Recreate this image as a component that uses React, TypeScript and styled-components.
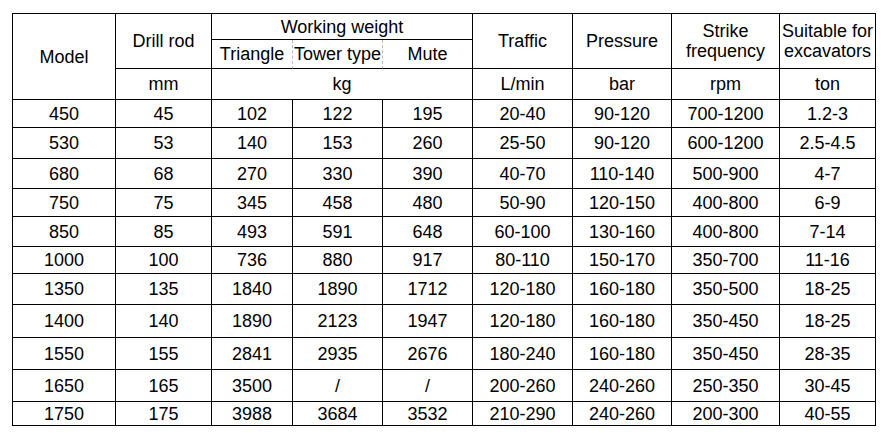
import React from 'react';
import styled, { createGlobalStyle } from 'styled-components';

const GlobalStyle = createGlobalStyle`
  html, body {
    margin: 0;
    padding: 0;
    background: #ffffff;
  }
  body {
    font-family: "Liberation Sans", Arial, sans-serif;
  }
`;

const Page = styled.div`
  padding: 13px 0 0 12px;
`;

const SpecTable = styled.table`
  border-collapse: separate;
  border-spacing: 0;
  table-layout: fixed;
  width: 863px;
  border-top: 1px solid #000;
  border-left: 1px solid #000;
  font-size: 18px;
  color: #000;
`;

const Col = styled.col<{ $w: number }>`
  width: ${({ $w }) => $w}px;
`;

const Row = styled.tr<{ $h: number }>`
  height: ${({ $h }) => $h}px;
`;

const Cell = styled.td<{ $dashed?: boolean }>`
  box-sizing: border-box;
  padding: 0;
  text-align: center;
  vertical-align: middle;
  white-space: nowrap;
  font-weight: normal;
  line-height: 20px;
  border-right: 1px ${({ $dashed }) => ($dashed ? 'dashed #b8b8b8' : 'solid #000')};
  border-bottom: 1px solid #000;
`;

const colWidths = [103, 96, 81, 90, 90, 100, 99, 108, 96];

const rows: { h: number; v: string[] }[] = [
  { h: 28, v: ['450', '45', '102', '122', '195', '20-40', '90-120', '700-1200', '1.2-3'] },
  { h: 31, v: ['530', '53', '140', '153', '260', '25-50', '90-120', '600-1200', '2.5-4.5'] },
  { h: 30, v: ['680', '68', '270', '330', '390', '40-70', '110-140', '500-900', '4-7'] },
  { h: 28, v: ['750', '75', '345', '458', '480', '50-90', '120-150', '400-800', '6-9'] },
  { h: 30, v: ['850', '85', '493', '591', '648', '60-100', '130-160', '400-800', '7-14'] },
  { h: 27, v: ['1000', '100', '736', '880', '917', '80-110', '150-170', '350-700', '11-16'] },
  { h: 31, v: ['1350', '135', '1840', '1890', '1712', '120-180', '160-180', '350-500', '18-25'] },
  { h: 33, v: ['1400', '140', '1890', '2123', '1947', '120-180', '160-180', '350-450', '18-25'] },
  { h: 32, v: ['1550', '155', '2841', '2935', '2676', '180-240', '160-180', '350-450', '28-35'] },
  { h: 32, v: ['1650', '165', '3500', '/', '/', '200-260', '240-260', '250-350', '30-45'] },
  { h: 24, v: ['1750', '175', '3988', '3684', '3532', '210-290', '240-260', '200-300', '40-55'] },
];

const App: React.FC = () => {
  return (
    <Page>
      <GlobalStyle />
      <SpecTable>
        <colgroup>
          {colWidths.map((w, i) => (
            <Col key={i} $w={w} />
          ))}
        </colgroup>
        <thead>
          <Row $h={26}>
            <Cell as="th" rowSpan={3}>Model</Cell>
            <Cell as="th" rowSpan={2}>Drill rod</Cell>
            <Cell as="th" colSpan={3}>Working weight</Cell>
            <Cell as="th" rowSpan={2}>Traffic</Cell>
            <Cell as="th" rowSpan={2}>Pressure</Cell>
            <Cell as="th" rowSpan={2}>
              Strike
              <br />
              frequency
            </Cell>
            <Cell as="th" rowSpan={2}>
              Suitable for
              <br />
              excavators
            </Cell>
          </Row>
          <Row $h={29}>
            <Cell as="th" $dashed>Triangle</Cell>
            <Cell as="th" $dashed>Tower type</Cell>
            <Cell as="th">Mute</Cell>
          </Row>
          <Row $h={31}>
            <Cell as="th">mm</Cell>
            <Cell as="th" colSpan={3}>kg</Cell>
            <Cell as="th">L/min</Cell>
            <Cell as="th">bar</Cell>
            <Cell as="th">rpm</Cell>
            <Cell as="th">ton</Cell>
          </Row>
        </thead>
        <tbody>
          {rows.map((r) => (
            <Row key={r.v[0]} $h={r.h}>
              {r.v.map((v, i) => (
                <Cell key={i}>{v}</Cell>
              ))}
            </Row>
          ))}
        </tbody>
      </SpecTable>
    </Page>
  );
};

export default App;
